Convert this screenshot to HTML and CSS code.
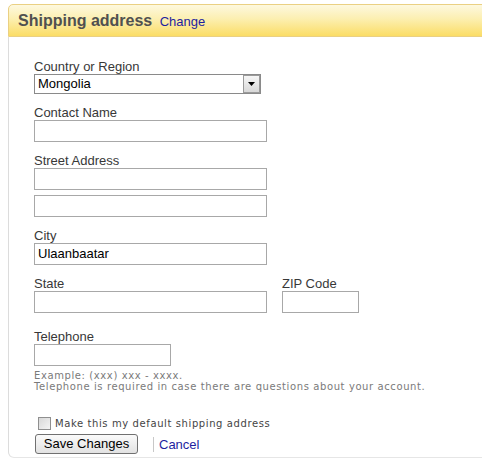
FILE: index.html
```html
<!DOCTYPE html>
<html>
<head>
<meta charset="utf-8">
<link rel="stylesheet" href="styles.css">
</head>
<body>
<div class="box">
  <div class="box-head">
    <span class="title">Shipping address</span>
    <a class="change" href="#">Change</a>
  </div>
  <div class="box-body">
    <div class="field">
      <div class="label">Country or Region</div>
      <div class="select">
        <span class="select-value">Mongolia</span>
        <span class="select-btn"><svg width="7" height="4" viewBox="0 0 7 4"><path d="M0 0H7L3.5 4Z" fill="#000"/></svg></span>
      </div>
    </div>
    <div class="field">
      <div class="label">Contact Name</div>
      <div class="input wide"></div>
    </div>
    <div class="field">
      <div class="label">Street Address</div>
      <div class="input wide"></div>
      <div class="input wide second"></div>
    </div>
    <div class="field">
      <div class="label">City</div>
      <div class="input wide">Ulaanbaatar</div>
    </div>
    <div class="field row">
      <div class="col">
        <div class="label">State</div>
        <div class="input wide"></div>
      </div>
      <div class="col">
        <div class="label">ZIP Code</div>
        <div class="input zip"></div>
      </div>
    </div>
    <div class="field tel-field">
      <div class="label">Telephone</div>
      <div class="input tel"></div>
      <div class="hint">Example: (xxx) xxx - xxxx.<br>Telephone is required in case there are questions about your account.</div>
    </div>
    <div class="check-row">
      <span class="checkbox"></span>
      <span class="check-text">Make this my default shipping address</span>
    </div>
    <div class="actions">
      <span class="btn">Save Changes</span>
      <span class="sep"></span>
      <a class="cancel" href="#">Cancel</a>
    </div>
  </div>
</div>
</body>
</html>
```

FILE: styles.css
```css
html, body {
  margin: 0;
  padding: 0;
  overflow: hidden;
  background: #fff;
  font-family: "Liberation Sans", Arial, sans-serif;
}
.box {
  margin: 4px -20px 0 8px;
}
.box-head {
  height: 31px;
  border: 1px solid #ead083;
  border-top-left-radius: 5px;
  background: linear-gradient(to bottom, #fdf8df 0%, #fcefb0 45%, #fbdd66 100%);
  padding-left: 9px;
  line-height: 31px;
  white-space: nowrap;
}
.title {
  font-size: 16px;
  font-weight: bold;
  color: #505050;
}
.change {
  margin-left: 3px;
  font-size: 13px;
  color: #1e1ea0;
  text-decoration: none;
}
.box-body {
  border-left: 1px solid #dcdcdc;
  border-bottom: 1px solid #e6e6e6;
  border-bottom-left-radius: 6px;
  padding: 23px 0 3px 25px;
}
.field {
  margin-bottom: 12px;
}
.field.row {
  display: flex;
  gap: 15px;
  margin-bottom: 17px;
}
.label {
  font-size: 13px;
  line-height: 14px;
  color: #383838;
}
.select {
  width: 227px;
  height: 20px;
  box-sizing: border-box;
  border: 1px solid #8a8a8a;
  display: flex;
  align-items: stretch;
  font-size: 13px;
  color: #000;
}
.select-value {
  flex: 1;
  padding-left: 3px;
  line-height: 18px;
}
.select-btn {
  width: 15px;
  border: 1px solid #9a9a9a;
  background: linear-gradient(to bottom, #f6f6f6, #d8d8d8);
  display: flex;
  align-items: center;
  justify-content: center;
}
.input {
  height: 22px;
  box-sizing: border-box;
  border: 1px solid #a8a8a8;
  font-size: 13px;
  line-height: 20px;
  padding-left: 3px;
  color: #000;
}
.input.wide { width: 233px; }
.input.second { margin-top: 5px; }
.input.zip { width: 77px; }
.input.tel { width: 137px; }
.tel-field { margin-bottom: 0; }
.hint {
  margin-top: 4px;
  font-family: "DejaVu Sans", Verdana, sans-serif;
  font-size: 10px;
  line-height: 11px;
  letter-spacing: 0.6px;
  color: #7a7a7a;
}
.check-row {
  margin-top: 25px;
  display: flex;
  align-items: center;
  height: 13px;
}
.checkbox {
  width: 13px;
  height: 13px;
  box-sizing: border-box;
  margin-left: 4px;
  border: 1px solid #8f8f8f;
  background: linear-gradient(135deg, #d8d8d8, #f4f4f4);
}
.check-text {
  margin-left: 4px;
  font-family: "DejaVu Sans", Verdana, sans-serif;
  font-size: 10px;
  letter-spacing: 0.6px;
  color: #444;
}
.actions {
  margin-top: 4px;
  display: flex;
  align-items: center;
}
.btn {
  margin-left: 1px;
  width: 103px;
  height: 20px;
  box-sizing: border-box;
  border: 1px solid #707070;
  border-radius: 3px;
  background: linear-gradient(to bottom, #fafafa, #e2e2e2);
  font-size: 13px;
  line-height: 18px;
  text-align: center;
  color: #000;
}
.sep {
  width: 1px;
  height: 15px;
  margin-left: 15px;
  background: #c8c8c8;
}
.cancel {
  margin-left: 5px;
  font-size: 13px;
  color: #1e1ea0;
  text-decoration: none;
}
```
